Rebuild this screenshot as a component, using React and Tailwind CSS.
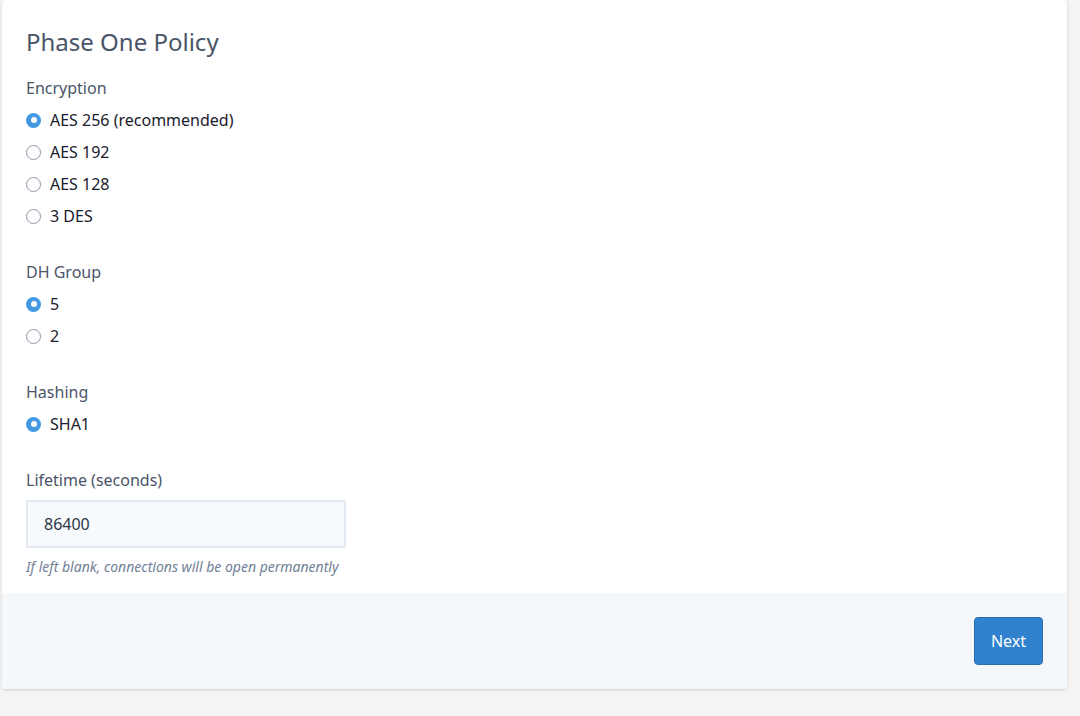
import React from "react";

function Radio({ checked, label }) {
  return (
    <label className="flex items-center h-6 cursor-pointer">
      <span
        className={
          checked
            ? "w-[15px] h-[15px] rounded-full bg-[#4299e1] flex items-center justify-center"
            : "w-[15px] h-[15px] rounded-full border border-[#8d97a5] bg-white"
        }
      >
        {checked && <span className="w-[6px] h-[6px] rounded-full bg-white" />}
      </span>
      <span className="ml-[9px] text-[16px] text-[#1a202c]">{label}</span>
    </label>
  );
}

function Group({ title, options, first }) {
  return (
    <div className={first ? "mt-4" : "mt-8"}>
      <div className="text-[16px] leading-6 text-[#4a5568] mb-2">{title}</div>
      <div className="flex flex-col gap-2">
        {options.map((o, i) => (
          <Radio key={o} label={o} checked={i === 0} />
        ))}
      </div>
    </div>
  );
}

export default function App() {
  return (
    <div
      className="w-[1080px] h-[716px] bg-[#f5f4f2] overflow-hidden"
      style={{ fontFamily: '"Noto Sans", "Open Sans", sans-serif' }}
    >
      <div className="ml-[2px] w-[1065px] bg-white rounded-[4px] shadow-[0_1px_3px_rgba(0,0,0,0.15)] overflow-hidden">
        <div className="px-6 pt-6 pb-4">
          <h2 className="text-[24px] leading-9 text-[#4a5568]">Phase One Policy</h2>
          <Group
            first
            title="Encryption"
            options={["AES 256 (recommended)", "AES 192", "AES 128", "3 DES"]}
          />
          <Group title="DH Group" options={["5", "2"]} />
          <Group title="Hashing" options={["SHA1"]} />
          <div className="mt-8">
            <div className="text-[16px] leading-6 text-[#4a5568] mb-2">Lifetime (seconds)</div>
            <div className="w-[320px] h-12 bg-[#f7fafc] border-2 border-[#e2e8f0] rounded-[3px] flex items-center px-4 text-[16px] text-[#2d3748]">
              86400
            </div>
            <div className="mt-[9px] text-[14px] leading-5 italic text-[#718096]">
              If left blank, connections will be open permanently
            </div>
          </div>
        </div>
        <div className="h-[96px] bg-[#f5f8fb] flex items-center justify-end px-6">
          <button className="h-12 px-4 bg-[#3182ce] border border-[#2b6cb0] rounded-[4px] text-white text-[16px]">
            Next
          </button>
        </div>
      </div>
    </div>
  );
}
